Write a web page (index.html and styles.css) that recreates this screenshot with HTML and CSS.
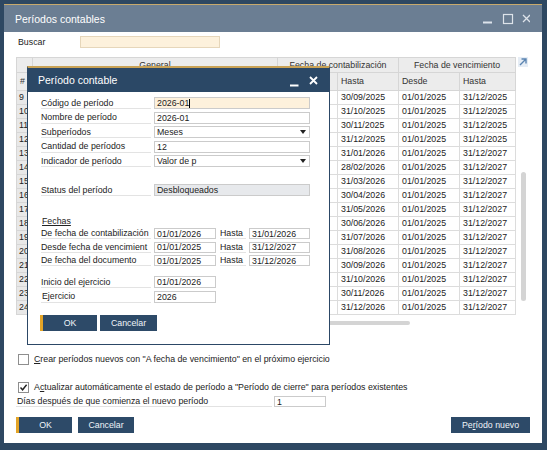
FILE: index.html
```html
<!DOCTYPE html>
<html lang="es">
<head>
    <meta charset="UTF-8">
    <title>Períodos contables</title>
    <link rel="stylesheet" href="styles.css">
</head>
<body>
<div class="desktop">
    <div class="window">
        <div class="window-bar">
            <span class="window-title">Períodos contables</span>
            <svg class="window-icons" width="48" height="12" viewBox="0 0 48 12">
                <line x1="1" y1="9.5" x2="10" y2="9.5" stroke="#dde3ea" stroke-width="2"/>
                <rect x="21.5" y="1.5" width="9" height="9" fill="none" stroke="#dde3ea" stroke-width="1.2"/>
                <path d="M41 2 L48 9 M48 2 L41 9" stroke="#dde3ea" stroke-width="1.3"/>
            </svg>
        </div>

        <div class="window-body">
            <div class="search-row">
                <label>Buscar</label>
                <div class="search-input"></div>
            </div>

            <div class="grid-wrap">
                <table class="grid">
                    <colgroup>
                        <col style="width:16px">
                        <col style="width:80px">
                        <col style="width:80px">
                        <col style="width:85px">
                        <col style="width:60px">
                        <col style="width:61px">
                        <col style="width:61px">
                        <col style="width:56px">
                    </colgroup>
                    <thead>
                        <tr class="h1">
                            <th></th>
                            <th colspan="3">General</th>
                            <th colspan="2">Fecha de contabilización</th>
                            <th colspan="2">Fecha de vencimiento</th>
                        </tr>
                        <tr class="h2">
                            <th>#</th>
                            <th></th>
                            <th></th>
                            <th></th>
                            <th></th>
                            <th>Hasta</th>
                            <th>Desde</th>
                            <th>Hasta</th>
                        </tr>
                    </thead>
                    <!-- columns under the open dialog are left blank -->
                    <tbody>
                        <tr><td class="num">9</td><td></td><td></td><td></td><td></td><td>30/09/2025</td><td>01/01/2025</td><td>31/12/2025</td></tr>
                        <tr><td class="num">10</td><td></td><td></td><td></td><td></td><td>31/10/2025</td><td>01/01/2025</td><td>31/12/2025</td></tr>
                        <tr><td class="num">11</td><td></td><td></td><td></td><td></td><td>30/11/2025</td><td>01/01/2025</td><td>31/12/2025</td></tr>
                        <tr><td class="num">12</td><td></td><td></td><td></td><td></td><td>31/12/2025</td><td>01/01/2025</td><td>31/12/2025</td></tr>
                        <tr><td class="num">13</td><td></td><td></td><td></td><td></td><td>31/01/2026</td><td>01/01/2025</td><td>31/12/2027</td></tr>
                        <tr><td class="num">14</td><td></td><td></td><td></td><td></td><td>28/02/2026</td><td>01/01/2025</td><td>31/12/2027</td></tr>
                        <tr><td class="num">15</td><td></td><td></td><td></td><td></td><td>31/03/2026</td><td>01/01/2025</td><td>31/12/2027</td></tr>
                        <tr><td class="num">16</td><td></td><td></td><td></td><td></td><td>30/04/2026</td><td>01/01/2025</td><td>31/12/2027</td></tr>
                        <tr><td class="num">17</td><td></td><td></td><td></td><td></td><td>31/05/2026</td><td>01/01/2025</td><td>31/12/2027</td></tr>
                        <tr><td class="num">18</td><td></td><td></td><td></td><td></td><td>30/06/2026</td><td>01/01/2025</td><td>31/12/2027</td></tr>
                        <tr><td class="num">19</td><td></td><td></td><td></td><td></td><td>31/07/2026</td><td>01/01/2025</td><td>31/12/2027</td></tr>
                        <tr><td class="num">20</td><td></td><td></td><td></td><td></td><td>31/08/2026</td><td>01/01/2025</td><td>31/12/2027</td></tr>
                        <tr><td class="num">21</td><td></td><td></td><td></td><td></td><td>30/09/2026</td><td>01/01/2025</td><td>31/12/2027</td></tr>
                        <tr><td class="num">22</td><td></td><td></td><td></td><td></td><td>31/10/2026</td><td>01/01/2025</td><td>31/12/2027</td></tr>
                        <tr><td class="num">23</td><td></td><td></td><td></td><td></td><td>30/11/2026</td><td>01/01/2025</td><td>31/12/2027</td></tr>
                        <tr><td class="num">24</td><td></td><td></td><td></td><td></td><td>31/12/2026</td><td>01/01/2025</td><td>31/12/2027</td></tr>
                    </tbody>
                </table>
                <div class="grid-side">
                    <svg class="expand" width="10" height="10" viewBox="0 0 10 10">
                        <rect x="0" y="0" width="10" height="10" fill="#e6edf5"/>
                        <path d="M2 8 L8 2 M3.5 2 H8 V6.5" fill="none" stroke="#5b84b1" stroke-width="1.4"/>
                    </svg>
                    <div class="vscroll"></div>
                </div>
            </div>
            <div class="hscroll"></div>

            <div class="check-row first">
                <span class="box"></span>
                <span><u>C</u>rear períodos nuevos con "A fecha de vencimiento" en el próximo ejercicio</span>
            </div>
            <div class="check-row">
                <span class="box">
                    <svg width="9" height="9" viewBox="0 0 9 9">
                        <path d="M1.5 4.5 L3.6 6.8 L7.6 1.8" fill="none" stroke="#222" stroke-width="1.4"/>
                    </svg>
                </span>
                <span>A<u>c</u>tualizar automáticamente el estado de período a "Período de cierre" para períodos existentes</span>
            </div>
            <div class="days-row">
                <label>Días después de que comienza el nuevo período</label>
                <div class="input days-input">1</div>
            </div>

            <div class="actions">
                <div class="btn primary">OK</div>
                <div class="btn">Cancelar</div>
                <div class="btn wide">Pe<u>r</u>íodo nuevo</div>
            </div>
        </div>

        <div class="dialog">
            <div class="dialog-bar">
                <span class="dialog-title">Período contable</span>
                <svg width="29" height="14" viewBox="0 0 29 14">
                    <line x1="0" y1="12.5" x2="8.5" y2="12.5" stroke="#fff" stroke-width="2"/>
                    <path d="M20 4 L27 11 M27 4 L20 11" stroke="#fff" stroke-width="1.8"/>
                </svg>
            </div>
            <div class="dialog-body">
                <div class="field">
                    <label>Código de período</label>
                    <div class="input active">2026-01<span class="caret"></span></div>
                </div>
                <div class="field">
                    <label>Nombre de período</label>
                    <div class="input">2026-01</div>
                </div>
                <div class="field">
                    <label>Subperíodos</label>
                    <div class="input select">Meses<span class="arrow"></span></div>
                </div>
                <div class="field">
                    <label>Cantidad de períodos</label>
                    <div class="input">12</div>
                </div>
                <div class="field">
                    <label>Indicador de período</label>
                    <div class="input select">Valor de p<span class="arrow"></span></div>
                </div>
                <div class="field status">
                    <label>Status del período</label>
                    <div class="input readonly">Desbloqueados</div>
                </div>

                <div class="section-title"><u>Fechas</u></div>
                <div class="field date">
                    <label>De fecha de contabilización</label>
                    <div class="input short">01/01/2026</div>
                    <span class="to">Hasta</span>
                    <div class="input">31/01/2026</div>
                </div>
                <div class="field date">
                    <label>Desde fecha de vencimient</label>
                    <div class="input short">01/01/2025</div>
                    <span class="to">Hasta</span>
                    <div class="input">31/12/2027</div>
                </div>
                <div class="field date">
                    <label>De fecha del documento</label>
                    <div class="input short">01/01/2025</div>
                    <span class="to">Hasta</span>
                    <div class="input">31/12/2026</div>
                </div>

                <div class="field year first-year">
                    <label>Inicio del ejercicio</label>
                    <div class="input short">01/01/2026</div>
                </div>
                <div class="field year">
                    <label class="indent">Ejercicio</label>
                    <div class="input short">2026</div>
                </div>

                <div class="dialog-actions">
                    <div class="btn primary">OK</div>
                    <div class="btn">Cancelar</div>
                </div>
            </div>
        </div>
    </div>
</div>
</body>
</html>
```

FILE: styles.css
```css
* {
    box-sizing: border-box;
}

body {
    margin: 0;
    background-color: #2e4862;
    font-family: "Liberation Sans", Arial, sans-serif;
    font-size: 8.8px;
    color: #222;
}

.desktop {
    height: 450px;
    padding: 4px 5px 0 4px;
}

.window {
    position: relative;
    width: 538px;
    height: 439px;
    background-color: #fff;
    border-top: 1px solid #c8aa6c;
}

.window-bar {
    height: 27px;
    background-color: #6b7e93;
    display: flex;
    align-items: center;
    justify-content: space-between;
    padding: 0 12px 0 11px;
    color: #fff;
    font-size: 10.5px;
}

.window-body {
    padding: 4px 12px 0 12px;
}

/* search */

.search-row {
    display: flex;
    align-items: center;
    height: 12px;
}

.search-row label {
    width: 64px;
    padding-left: 2px;
}

.search-input {
    width: 140px;
    height: 12px;
    background-color: #fdf1dc;
    border: 1px solid #e6d6ba;
}

/* grid */

.grid-wrap {
    display: flex;
    margin-top: 9px;
}

.grid {
    width: 499px;
    border-collapse: collapse;
    table-layout: fixed;
}

.grid th,
.grid td {
    border: 1px solid #dcdcdc;
    padding: 0 3px;
    white-space: nowrap;
    overflow: hidden;
    font-weight: normal;
    text-align: left;
    line-height: 11px;
}

.grid thead th {
    background-color: #ececec;
    color: #333;
    border-color: #d6d6d6;
}

.grid .h1 th {
    height: 15px;
    text-align: center;
}

.grid .h2 th {
    height: 18px;
}

.grid td {
    height: 14px;
}

.grid td.num {
    background-color: #e8e8e8;
    border-color: #d6d6d6;
    padding-left: 2px;
}

.grid-side {
    width: 14px;
    padding-left: 2px;
}

.expand {
    display: block;
}

.vscroll {
    width: 5px;
    height: 129px;
    margin: 105px 0 0 3px;
    background-color: #d4d4d4;
    border-radius: 3px;
}

.hscroll {
    width: 194px;
    height: 4px;
    margin: 6px 0 0 200px;
    background-color: #d4d4d4;
    border-radius: 2px;
}

/* checkboxes */

.check-row {
    display: flex;
    align-items: center;
    height: 12px;
    margin-top: 16px;
    padding-left: 2px;
}

.check-row.first {
    margin-top: 28px;
}

.box {
    width: 11px;
    height: 11px;
    margin-right: 5px;
    border: 1px solid #8e8e8e;
    background-color: #fff;
    display: flex;
    align-items: center;
    justify-content: center;
}

.days-row {
    display: flex;
    height: 11px;
    margin-top: 3px;
}

.days-row label {
    width: 256px;
    padding-left: 1px;
    border-bottom: 1px solid #e2e2e2;
    display: flex;
    align-items: center;
}

.days-input {
    width: 52px;
    margin-left: 2px;
}

/* inputs */

.input {
    flex: 1;
    display: flex;
    align-items: center;
    padding: 0 2px;
    background-color: #fff;
    border: 1px solid #cbcbcb;
    white-space: nowrap;
}

.days-input {
    flex: none;
}

.input.active {
    background-color: #fdf1dc;
}

.input.readonly {
    background-color: #e7e9ec;
}

.input.select {
    justify-content: space-between;
    padding-right: 3px;
}

.input.short {
    flex: none;
    width: 62px;
}

.caret {
    width: 1px;
    height: 9px;
    background-color: #000;
}

.arrow {
    width: 0;
    height: 0;
    border-left: 3.5px solid transparent;
    border-right: 3.5px solid transparent;
    border-top: 4px solid #222;
}

/* buttons */

.actions {
    display: flex;
    margin-top: 10px;
}

.btn {
    width: 56px;
    height: 16px;
    margin-right: 6px;
    display: flex;
    align-items: center;
    justify-content: center;
    background-color: #2d4a68;
    color: #f0f4f8;
}

.btn.primary {
    border-left: 3px solid #e3a427;
}

.btn.wide {
    width: 79px;
    margin-left: auto;
    margin-right: 0;
}

/* dialog */

.dialog {
    position: absolute;
    left: 23px;
    top: 61px;
    width: 303px;
    height: 279px;
    background-color: #fff;
    border: 1px solid #2c4866;
    border-top: 2px solid #c9a255;
}

.dialog-bar {
    height: 24px;
    background-color: #2b4866;
    display: flex;
    align-items: center;
    justify-content: space-between;
    padding: 0 10px 0 10px;
    color: #fff;
    font-size: 10.5px;
}

.dialog-body {
    padding: 5px 19px 0 13px;
}

.field {
    display: flex;
    height: 12px;
    margin-bottom: 2.6px;
}

.field label {
    width: 110px;
    margin-right: 3px;
    border-bottom: 1px solid #e3e3e3;
    display: flex;
    align-items: center;
    white-space: nowrap;
    overflow: hidden;
}

.field.status {
    margin-top: 17px;
}

.section-title {
    height: 11px;
    margin: 20px 0 1px 1px;
}

.field.date {
    height: 11px;
    margin-bottom: 2.5px;
}

.to {
    width: 26px;
    margin: 0 3px 0 4px;
    border-bottom: 1px solid #e3e3e3;
    display: flex;
    align-items: center;
}

.field.first-year {
    margin-top: 10px;
}

.field .indent {
    padding-left: 1px;
}

.dialog-actions {
    display: flex;
    margin: 12px 0 0 -1px;
}

.dialog-actions .btn {
    width: 57px;
    margin-right: 3px;
}
```
